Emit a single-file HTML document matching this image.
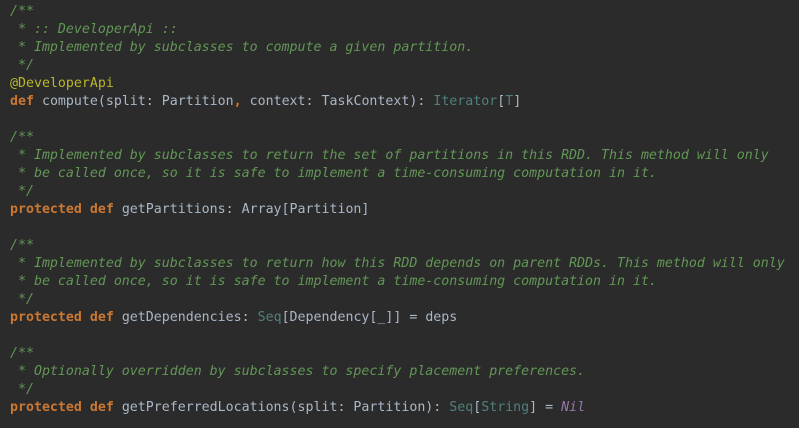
<!DOCTYPE html>
<html><head><style>
html,body{margin:0;padding:0;background:#2b2b2b;width:799px;height:428px;overflow:hidden}
pre{margin:0;padding:3px 0 0 10px;font-family:"DejaVu Sans Mono","Liberation Mono",monospace;font-size:13.28px;line-height:18px;color:#a9b7c6}
.c{color:#629755;font-style:italic}
.k{color:#cc7832;font-weight:bold}
.a{color:#bbb529}
.t{color:#4e807d}
.n{color:#9876aa;font-style:italic}
</style></head><body><pre><span class="c">/**
 * :: DeveloperApi ::
 * Implemented by subclasses to compute a given partition.
 */</span>
<span class="a">@DeveloperApi</span>
<span class="k">def</span> compute(split: Partition<span class="k">,</span> context: TaskContext): <span class="t">Iterator</span>[<span class="t">T</span>]

<span class="c">/**
 * Implemented by subclasses to return the set of partitions in this RDD. This method will only
 * be called once, so it is safe to implement a time-consuming computation in it.
 */</span>
<span class="k">protected def</span> getPartitions: Array[Partition]

<span class="c">/**
 * Implemented by subclasses to return how this RDD depends on parent RDDs. This method will only
 * be called once, so it is safe to implement a time-consuming computation in it.
 */</span>
<span class="k">protected def</span> getDependencies: <span class="t">Seq</span>[Dependency[_]] = deps

<span class="c">/**
 * Optionally overridden by subclasses to specify placement preferences.
 */</span>
<span class="k">protected def</span> getPreferredLocations(split: Partition): <span class="t">Seq</span>[<span class="t">String</span>] = <span class="n">Nil</span>
</pre></body></html>
